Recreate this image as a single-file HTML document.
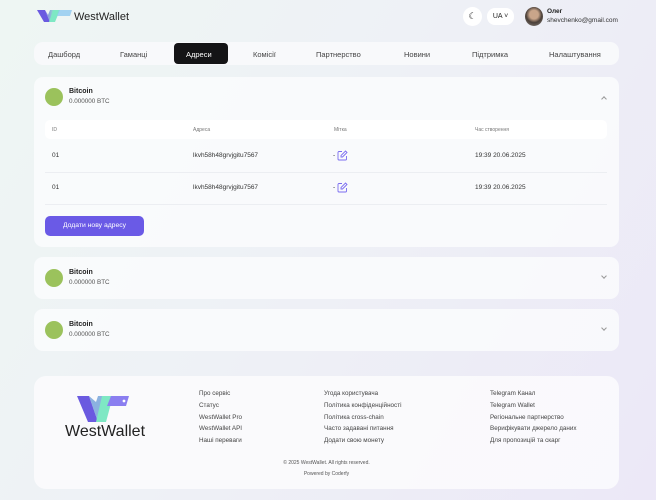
<!DOCTYPE html>
<html><head><meta charset="utf-8"><style>
*{box-sizing:border-box;margin:0;padding:0}
body{width:656px;height:500px;overflow:hidden;font-family:"Liberation Sans",sans-serif;color:#222;background:linear-gradient(120deg,#eef6f3 0%,#eef1f6 45%,#ece8f7 100%);position:relative}
.a{position:absolute}
.card{position:absolute;left:34px;width:585px;background:rgba(250,251,253,0.85);border-radius:9px}
.nav span{position:absolute;top:8px;font-size:7.5px;color:#444}
.t{font-size:6.5px;color:#333;position:absolute}
.h{font-size:5px;color:#777;position:absolute;top:7px}
.fl{position:absolute;font-size:6.3px;color:#444;line-height:11.8px}
.coin{position:absolute;left:11px;width:18px;height:18px;border-radius:50%;background:#9bc25c}
.cn{position:absolute;left:35px;font-size:7px;font-weight:bold}
.cb{position:absolute;left:35px;font-size:6.3px;color:#555}
.chev{position:absolute;right:13px;width:4px;height:4px;border-right:1px solid #999;border-bottom:1px solid #999}
</style></head><body>
<svg class="a" style="left:37px;top:9px" width="36" height="15" viewBox="0 0 36 15"><defs><linearGradient id="g" x1="0" x2="1"><stop offset="0" stop-color="#6a5ae0"/><stop offset="1" stop-color="#7ee8c4"/></linearGradient></defs><path d="M0 1h8l5 12h-6z" fill="#6a5ae0"/><path d="M8 1l5 12 5-12h-5l-2 5z" fill="url(#g)" opacity=".8"/><path d="M16 1h7l-5 12h-6z" fill="#7ee8c4"/><path d="M22 1h13l-2 6h-13z" fill="#8ec9f0" opacity=".8"/></svg>
<div class="a" style="left:74px;top:11px;font-size:11px;color:#222">WestWallet</div>
<div class="a" style="left:463px;top:7px;width:19px;height:19px;border-radius:50%;background:#fff;font-size:9px;text-align:center;line-height:19px">☾</div>
<div class="a" style="left:487px;top:8px;width:27px;height:17px;border-radius:8px;background:#fff;font-size:7px;text-align:center;line-height:17px">UA ˅</div>
<div class="a" style="left:525px;top:7px;width:18px;height:19px;border-radius:50%;background:radial-gradient(circle at 50% 40%,#c9a58a 0 30%,#4a3f38 55%,#8a8580 100%)"></div>
<div class="a" style="left:547px;top:8px;font-size:6.5px;font-weight:bold">Олег</div>
<div class="a" style="left:547px;top:17px;font-size:6.5px;color:#333">shevchenko@gmail.com</div>
<div class="card nav" style="top:42px;height:23px;background:#f8f9fb">
<span style="left:14px">Дашборд</span><span style="left:86px">Гаманці</span>
<div class="a" style="left:140px;top:1px;width:54px;height:21px;border-radius:4px;background:#141416"></div>
<span style="left:152px;color:#fff">Адреси</span>
<span style="left:219px">Комісії</span><span style="left:282px">Партнерство</span>
<span style="left:370px">Новини</span><span style="left:438px">Підтримка</span><span style="left:515px">Налаштування</span>
</div>
<div class="card" style="top:77px;height:170px">
<div class="coin" style="top:11px"></div><div class="cn" style="top:11px">Bitcoin</div><div class="cb" style="top:21px">0.000000 BTC</div>
<div class="chev" style="top:20px;transform:rotate(-135deg)"></div>
<div class="a" style="left:11px;top:43px;width:562px;height:19px;background:#fff;border-radius:5px">
<div class="h" style="left:7px">ID</div><div class="h" style="left:148px">Адреса</div><div class="h" style="left:289px">Мітка</div><div class="h" style="left:430px">Час створення</div></div>
<div class="t" style="left:18px;top:75px">01</div><div class="t" style="left:159px;top:75px">lkvh58h48grvjgitu7567</div><div class="t" style="left:299px;top:73px">- <svg width="11" height="11" viewBox="0 0 11 11" style="vertical-align:middle"><path d="M5 1.5H2a1 1 0 0 0-1 1V9a1 1 0 0 0 1 1h6.5a1 1 0 0 0 1-1V6" fill="none" stroke="#7a6cf0" stroke-width=".9"/><path d="M8.5 1l1.5 1.5L5.5 7H4V5.5z" fill="none" stroke="#7a6cf0" stroke-width=".9"/></svg></div><div class="t" style="left:441px;top:75px">19:39 20.06.2025</div>
<div class="a" style="left:11px;top:95px;width:562px;height:1px;background:#eceef2"></div>
<div class="t" style="left:18px;top:107px">01</div><div class="t" style="left:159px;top:107px">lkvh58h48grvjgitu7567</div><div class="t" style="left:299px;top:105px">- <svg width="11" height="11" viewBox="0 0 11 11" style="vertical-align:middle"><path d="M5 1.5H2a1 1 0 0 0-1 1V9a1 1 0 0 0 1 1h6.5a1 1 0 0 0 1-1V6" fill="none" stroke="#7a6cf0" stroke-width=".9"/><path d="M8.5 1l1.5 1.5L5.5 7H4V5.5z" fill="none" stroke="#7a6cf0" stroke-width=".9"/></svg></div><div class="t" style="left:441px;top:107px">19:39 20.06.2025</div>
<div class="a" style="left:11px;top:127px;width:562px;height:1px;background:#eceef2"></div>
<div class="a" style="left:11px;top:139px;width:99px;height:20px;border-radius:5px;background:#6a5ae6;color:#fff;font-size:6.8px;text-align:center;line-height:20px">Додати нову адресу</div>
</div>
<div class="card" style="top:257px;height:42px"><div class="coin" style="top:12px"></div><div class="cn" style="top:12px">Bitcoin</div><div class="cb" style="top:22px">0.000000 BTC</div><div class="chev" style="top:17px;transform:rotate(45deg)"></div></div>
<div class="card" style="top:309px;height:42px"><div class="coin" style="top:12px"></div><div class="cn" style="top:12px">Bitcoin</div><div class="cb" style="top:22px">0.000000 BTC</div><div class="chev" style="top:17px;transform:rotate(45deg)"></div></div>
<div class="card" style="top:376px;height:113px;border-radius:12px;background:rgba(251,251,253,0.9)">
<svg class="a" style="left:43px;top:20px" width="52" height="26" viewBox="0 0 52 26"><path d="M0 0h12l9 26h-10z" fill="#6a5ae0"/><path d="M12 0l9 26 8-26h-8l-2 6z" fill="#6fa0d8" opacity=".8"/><path d="M25 0h11l-7 26h-10z" fill="#7ee8c4"/><path d="M34 0h18l-3 10h-19z" fill="#8a7ef0"/><circle cx="47" cy="5" r="1.4" fill="#fff"/></svg>
<div class="a" style="left:31px;top:47px;font-size:16px;color:#222">WestWallet</div>
<div class="fl" style="left:165px;top:12px">Про сервіс<br>Статус<br>WestWallet Pro<br>WestWallet API<br>Наші переваги</div>
<div class="fl" style="left:290px;top:12px">Угода користувача<br>Політика конфіденційності<br>Політика cross-chain<br>Часто задавані питання<br>Додати свою монету</div>
<div class="fl" style="left:456px;top:12px">Telegram Канал<br>Telegram Wallet<br>Регіональне партнерство<br>Верифікувати джерело даних<br>Для пропозицій та скарг</div>
<div class="a" style="left:0;width:585px;top:84px;text-align:center;font-size:5px;color:#555">© 2025 WestWallet. All rights reserved.</div>
<div class="a" style="left:0;width:585px;top:95px;text-align:center;font-size:5px;color:#555">Powered by Coderfy</div>
</div>
</body></html>
